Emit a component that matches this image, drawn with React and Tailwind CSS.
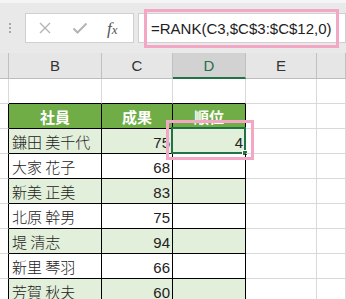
import React from "react";

const COLS = [9, 93, 71, 73, 71, 29];
const DATA = [
  ["鎌田 美千代", "75", "4"],
  ["大家 花子", "68", ""],
  ["新美 正美", "83", ""],
  ["北原 幹男", "75", ""],
  ["堤 清志", "94", ""],
  ["新里 琴羽", "66", ""],
  ["芳賀 秋夫", "60", ""],
];

const JP = { fontFamily: '"Noto Sans CJK JP", "Noto Sans", sans-serif' };
const LAT = { fontFamily: '"Liberation Sans", Arial, sans-serif' };

function Cell({ w, right, bottom, bg, children, className = "", style }) {
  return (
    <div
      className={`relative shrink-0 h-full border-r border-b flex items-center ${className}`}
      style={{
        width: w,
        borderRightColor: right,
        borderBottomColor: bottom,
        background: bg,
        ...style,
      }}
    >
      {children}
    </div>
  );
}

export default function App() {
  const grid = "#d9d9d9";
  const black = "#000000";
  const green = "#e2efda";
  const rows = [];
  rows.push(
    <div key="r1" className="flex h-[25px]">
      {COLS.map((w, c) => (
        <Cell
          key={c}
          w={w}
          right={grid}
          bottom={c >= 1 && c <= 3 ? black : grid}
        />
      ))}
    </div>
  );
  const heads = ["社員", "成果", "順位"];
  rows.push(
    <div key="r2" className="flex h-[25px]">
      {COLS.map((w, c) => (
        <Cell
          key={c}
          w={w}
          right={c <= 3 ? black : grid}
          bottom={c >= 1 && c <= 3 ? black : grid}
          bg={c >= 1 && c <= 3 ? "#70ad47" : undefined}
          className="justify-center"
        >
          {c >= 1 && c <= 3 && (
            <span className="text-white font-bold text-[15px] leading-none" style={JP}>
              {heads[c - 1]}
            </span>
          )}
        </Cell>
      ))}
    </div>
  );
  DATA.forEach((d, i) => {
    const shaded = i % 2 === 0;
    rows.push(
      <div key={"d" + i} className="flex h-[25px]">
        {COLS.map((w, c) => {
          const inTable = c >= 1 && c <= 3;
          let content = null;
          let cls = "";
          if (c === 1) {
            content = (
              <span className="text-[15px] font-light leading-none text-[#222] pl-[3px] pt-[1px] whitespace-nowrap" style={JP}>
                {d[0]}
              </span>
            );
          } else if (c === 2 || c === 3) {
            cls = "justify-end";
            content = (
              <span className="text-[15px] leading-none text-[#222] pr-[2px] pt-[2px]" style={LAT}>
                {d[c - 1]}
              </span>
            );
          }
          return (
            <Cell
              key={c}
              w={w}
              right={c <= 3 ? black : grid}
              bottom={inTable ? black : grid}
              bg={inTable && shaded ? green : undefined}
              className={cls}
            >
              {content}
              {i === 0 && c === 3 && (
                <>
                  <div className="absolute left-[-2px] top-[-2px] w-[75px] h-[27px] border-2 border-[#217346] pointer-events-none" />
                  <div className="absolute left-[69px] top-[21px] w-[6px] h-[6px] bg-[#217346] border border-white" />
                </>
              )}
            </Cell>
          );
        })}
      </div>
    );
  });

  return (
    <div className="relative w-[346px] h-[299px] overflow-hidden bg-white">
      <div className="h-[53px] bg-[#e9e9e9] border-t-[3px] border-[#f5f5f5] flex items-start pt-[10px]">
        <div className="w-[25px] h-[30px] flex flex-col items-center justify-center gap-[2px] pr-[5px]">
          <div className="w-[2px] h-[2px] bg-[#a8a8a8]" />
          <div className="w-[2px] h-[2px] bg-[#a8a8a8]" />
          <div className="w-[2px] h-[2px] bg-[#a8a8a8]" />
        </div>
        <div className="w-[109px] h-[30px] bg-white border border-[#d0d0d0] flex items-center">
          <svg width="14" height="14" viewBox="0 0 14 14" className="ml-[12px]">
            <path d="M2 2 L12 12 M12 2 L2 12" stroke="#b4b4b4" strokeWidth="1.4" fill="none" />
          </svg>
          <svg width="16" height="14" viewBox="0 0 16 14" className="ml-[20px]">
            <path d="M1.5 7.5 L5.5 11.5 L14.5 2.5" stroke="#b4b4b4" strokeWidth="2" fill="none" />
          </svg>
          <span
            className="ml-[19px] italic text-[17px] text-[#555] leading-none"
            style={{ fontFamily: '"Liberation Serif", "Times New Roman", serif' }}
          >
            f<span className="text-[13px]">x</span>
          </span>
        </div>
        <div className="ml-[4px] flex-1 h-[30px] bg-white border border-[#d0d0d0] flex items-center pl-[12px]">
          <span className="text-[15px] leading-none text-[#222] whitespace-nowrap pt-[1px]" style={LAT}>
            =RANK(C3,$C$3:$C$12,0)
          </span>
        </div>
      </div>
      <div className="flex h-[26px] bg-[#e6e6e6]">
        {COLS.map((w, c) => {
          const letters = ["", "B", "C", "D", "E", ""];
          const sel = c === 3;
          return (
            <div
              key={c}
              className={`shrink-0 h-full border-r flex items-center justify-center ${
                sel ? "bg-[#d2d2d2] border-b-2 border-b-[#217346]" : "border-b border-b-[#bdbdbd]"
              } border-r-[#c0c0c0]`}
              style={{ width: w }}
            >
              <span
                className={`text-[15px] leading-none ${sel ? "text-[#217346]" : "text-[#333]"}`}
                style={LAT}
              >
                {letters[c]}
              </span>
            </div>
          );
        })}
      </div>
      {rows}
      <div className="absolute left-[144px] top-[9px] w-[195px] h-[39px] border-[3px] border-[#f4a7c5] pointer-events-none" />
      <div className="absolute left-[166px] top-[120px] w-[88px] h-[40px] border-[3px] border-[#f4a7c5] pointer-events-none" />
    </div>
  );
}
